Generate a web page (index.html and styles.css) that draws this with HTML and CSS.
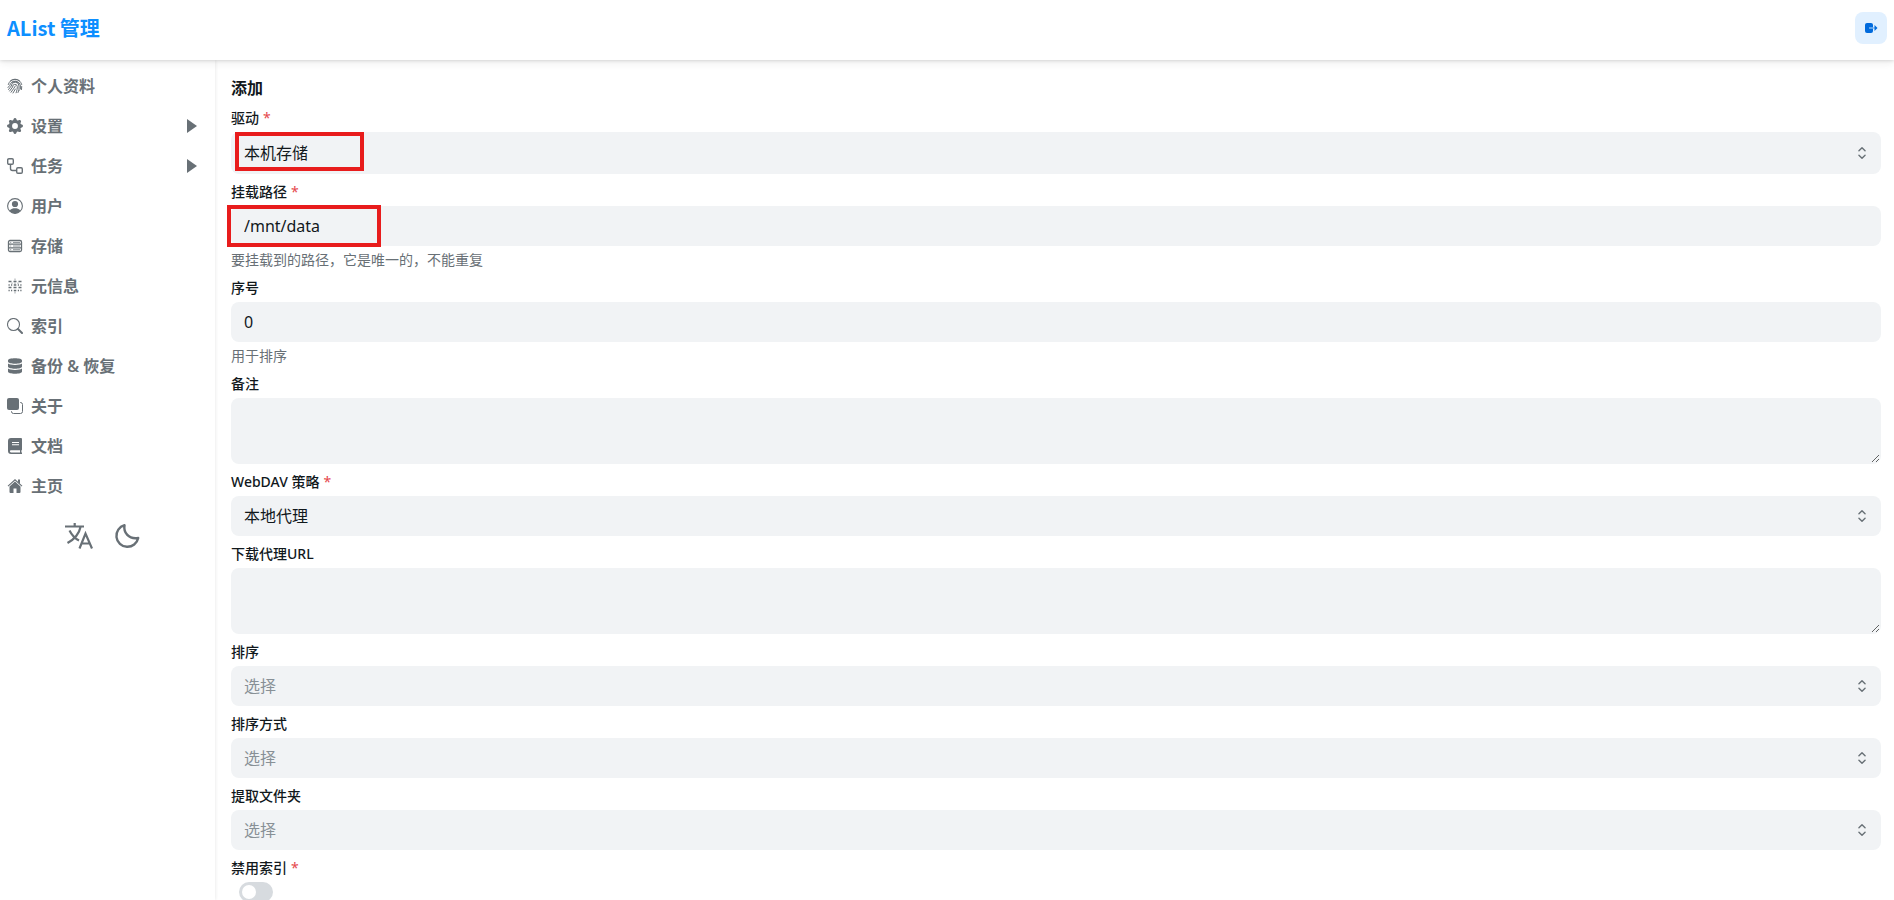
FILE: index.html
```html
<!DOCTYPE html>
<html lang="zh-CN">
<head>
<meta charset="utf-8">
<title>AList 管理</title>
<link rel="stylesheet" href="styles.css">
</head>
<body>
<svg class="defs" aria-hidden="true">
  <symbol id="updown" viewBox="0 0 16 16"><path d="M4.500 5.500 8 2l3.500 3.500M4.500 10.500 8 14l3.500-3.500" fill="none" stroke="currentColor" stroke-width="1.600" stroke-linecap="round" stroke-linejoin="round"/></symbol>
</svg>
<header class="header">
  <a class="brand" href="#">AList 管理</a>
  <button class="logout" type="button" aria-label="登出">
    <svg viewBox="0 0 16 16" width="16" height="16"><rect x="2" y="3" width="8" height="10" rx="2" fill="currentColor"/><path d="M6 8h6" stroke="#7db8f2" stroke-width="1.500"/><path d="M11.500 5 14.500 8l-3 3z" fill="currentColor"/></svg>
  </button>
</header>
<div class="layout">
  <nav class="sidebar">
    <a class="item" href="#"><svg viewBox="0 0 16 16" class="icon"><g fill="none" stroke="currentColor" stroke-width="1" stroke-linecap="round"><path d="M3.500 2.700A7 7 0 0 1 12.500 2.700M1.300 6.500a7 7 0 0 1 13.400 0M1 9.500 2.800 7.400A5.400 5.400 0 0 1 13.400 8v3M1.500 11.500 4.300 8A3.800 3.800 0 0 1 12 8v4.500M2.600 13l3-4A2.300 2.300 0 0 1 10.300 8.500c0 2-.3 4-1.200 6.300M4 14.300l3-4.200L8.300 8M6 15l2.400-4M11 14.500l.7-2M14.700 8.500l-.2 3M5 4.200a5.400 5.400 0 0 1 6.500.5"/></g></svg><span>个人资料</span></a>
    <a class="item" href="#"><svg viewBox="0 0 16 16" class="icon" fill="currentColor"><path d="M9.405 1.050c-.413-1.400-2.397-1.400-2.810 0l-.1.340a1.464 1.464 0 0 1-2.105.872l-.310-.170c-1.283-.698-2.686.705-1.987 1.987l.169.311c.446.820.023 1.841-.872 2.105l-.340.100c-1.400.413-1.400 2.397 0 2.810l.340.100a1.464 1.464 0 0 1 .872 2.105l-.170.310c-.698 1.283.705 2.686 1.987 1.987l.311-.169a1.464 1.464 0 0 1 2.105.872l.100.340c.413 1.400 2.397 1.400 2.810 0l.100-.340a1.464 1.464 0 0 1 2.105-.872l.310.170c1.283.698 2.686-.705 1.987-1.987l-.169-.311a1.464 1.464 0 0 1 .872-2.105l.340-.100c1.400-.413 1.400-2.397 0-2.810l-.340-.100a1.464 1.464 0 0 1-.872-2.105l.170-.310c.698-1.283-.705-2.686-1.987-1.987l-.311.169a1.464 1.464 0 0 1-2.105-.872zM8 10.930a2.930 2.930 0 1 1 0-5.860 2.930 2.930 0 0 1 0 5.860z"/></svg><span>设置</span><svg viewBox="0 0 12 14" class="arrow"><path d="M1 0 11 7 1 14z" fill="currentColor"/></svg></a>
    <a class="item" href="#"><svg viewBox="0 0 16 16" class="icon"><g fill="none" stroke="currentColor" stroke-width="1.400"><rect x=".7" y=".7" width="5.600" height="5.600" rx="1.200"/><rect x="9.700" y="9.700" width="5.600" height="5.600" rx="1.200"/><path d="M3.500 6.300V10.500a2 2 0 0 0 2 2H9.700"/></g></svg><span>任务</span><svg viewBox="0 0 12 14" class="arrow"><path d="M1 0 11 7 1 14z" fill="currentColor"/></svg></a>
    <a class="item" href="#"><svg viewBox="0 0 16 16" class="icon"><circle cx="8" cy="8" r="7.400" fill="none" stroke="currentColor" stroke-width="1.100"/><circle cx="8" cy="6" r="3.100" fill="currentColor"/><path d="M2.500 12.700C4 10.600 6 10.200 8 10.200s4 .4 5.500 2.500A7.400 7.400 0 0 1 8 15.400a7.400 7.400 0 0 1-5.500-2.700z" fill="currentColor"/></svg><span>用户</span></a>
    <a class="item" href="#"><svg viewBox="0 0 16 16" class="icon"><g fill="none" stroke="currentColor"><rect x="1.500" y="2.500" width="13" height="11" rx="1.500" stroke-width="1.300"/><path d="M1.500 6.200h13M1.500 9.800h13" stroke-width="1.200"/><path d="M6 4.400h7M6 8h7M6 11.700h7M3.200 4.400h1M3.200 8h1M3.200 11.700h1" stroke-width=".8"/></g></svg><span>存储</span></a>
    <a class="item" href="#"><svg viewBox="0 0 16 16" class="icon"><g fill="none" stroke="currentColor" stroke-width="1.300"><path d="M1.500 3.500h3M6.500 3.500h3M11.500 3.500h3M1.500 7h1.200M4 7h1.200M6.800 7h2.500M10.800 7H12M13.300 7h1.200M1.500 9.500h3M6.500 9.500h3M11.500 9.500h3M1.500 12.500h1.200M4 12.500h1.200M6.800 12.500h2.500M10.800 12.500H12M13.300 12.500h1.200"/><path d="M8 .5v2M8 4.500v2M5 4.500v1.500M11 4.500v1.500M8 13.500v2" stroke-width="1" opacity=".6"/></g></svg><span>元信息</span></a>
    <a class="item" href="#"><svg viewBox="0 0 16 16" class="icon"><circle cx="6.500" cy="6.500" r="6" fill="none" stroke="currentColor" stroke-width="1.100"/><path d="m11 11 4 4" stroke="currentColor" stroke-width="2" stroke-linecap="round"/></svg><span>索引</span></a>
    <a class="item" href="#"><svg viewBox="0 0 16 16" class="icon" fill="currentColor"><path d="M1 2.500C1 1 4 .3 8 .3s7 .7 7 2.200v1C15 5 12 5.700 8 5.700S1 5 1 3.500zM1 5.500c1.500 1.100 4 1.400 7 1.400s5.500-.3 7-1.400v3c0 1.500-3 2.200-7 2.200s-7-.7-7-2.200zM1 10.500c1.500 1.100 4 1.400 7 1.400s5.500-.3 7-1.400v3c0 1.500-3 2.200-7 2.200s-7-.7-7-2.200z"/></svg><span>备份 &amp; 恢复</span></a>
    <a class="item" href="#"><svg viewBox="0 0 16 16" class="icon"><rect x="0" y="0" width="12" height="12" rx="2" fill="currentColor"/><path d="M13 4.500h.5a2 2 0 0 1 2 2v7a2 2 0 0 1-2 2h-7a2 2 0 0 1-2-2V13" fill="none" stroke="currentColor"/></svg><span>关于</span></a>
    <a class="item" href="#"><svg viewBox="0 0 16 16" class="icon"><path fill="currentColor" fill-rule="evenodd" d="M4 0h10a1 1 0 0 1 1 1v10.500a1 1 0 0 1-.6.900v2.100H15V16H4a3 3 0 0 1-3-3V3a3 3 0 0 1 3-3zM4 12.200a1.100 1.100 0 0 0 0 2.200h9v-2.200zM5 4v1h7V4zM5 6.200v1h7v-1z"/></svg><span>文档</span></a>
    <a class="item" href="#"><svg viewBox="0 0 16 16" class="icon" fill="currentColor"><path d="M8 3.500 2.500 8.500V14a1 1 0 0 0 1 1h3v-4.500h3V15h3a1 1 0 0 0 1-1V8.500z"/><path d="M1 8.200 8 1.800l7 6.400" fill="none" stroke="currentColor" stroke-width="1.100"/><path d="M11 1.500h2V6l-2-1.800z"/></svg><span>主页</span></a>
    <div class="tools">
      <button class="tool" type="button" aria-label="语言"><svg viewBox="0 0 28 28" width="28" height="28"><g fill="none" stroke="currentColor" stroke-width="2.200"><path d="M0 4.500h19M9.700 1v3.500M15.500 5C14 12.500 8 18 2.500 21M4.500 8.500C7 13.500 10 16.500 14 18.500M14.500 26.500 20.500 11.500 27 26.500M16.500 21.500h8.500"/></g></svg></button>
      <button class="tool" type="button" aria-label="深色模式"><svg viewBox="0 0 28 28" width="28" height="28"><path d="M11.500 3.200C10.300 10.500 15.500 17.500 25.200 16A11 11 0 1 1 11.500 3.200z" fill="none" stroke="currentColor" stroke-width="2.400" stroke-linejoin="round"/></svg></button>
    </div>
  </nav>
  <main class="content">
    <h1 class="title">添加</h1>
    <form class="form">
      <div class="field">
        <label class="label required" for="driver">驱动</label>
        <div class="control">
          <select class="input tall" id="driver"><option>本机存储</option></select>
          <svg class="updown"><use href="#updown"/></svg>
          <span class="mark mark-driver"></span>
        </div>
      </div>
      <div class="field">
        <label class="label required" for="mount">挂载路径</label>
        <div class="control">
          <input class="input" id="mount" type="text" value="/mnt/data">
          <span class="mark mark-mount"></span>
        </div>
        <p class="help">要挂载到的路径，它是唯一的，不能重复</p>
      </div>
      <div class="field">
        <label class="label" for="order">序号</label>
        <input class="input" id="order" type="text" inputmode="numeric" value="0">
        <p class="help">用于排序</p>
      </div>
      <div class="field">
        <label class="label" for="remark">备注</label>
        <textarea class="input area" id="remark"></textarea>
      </div>
      <div class="field">
        <label class="label required" for="webdav">WebDAV 策略</label>
        <div class="control">
          <select class="input" id="webdav"><option>本地代理</option></select>
          <svg class="updown"><use href="#updown"/></svg>
        </div>
      </div>
      <div class="field">
        <label class="label" for="proxy">下载代理URL</label>
        <textarea class="input area" id="proxy"></textarea>
      </div>
      <div class="field">
        <label class="label" for="sort">排序</label>
        <div class="control">
          <select class="input empty" id="sort"><option>选择</option></select>
          <svg class="updown"><use href="#updown"/></svg>
        </div>
      </div>
      <div class="field">
        <label class="label" for="direction">排序方式</label>
        <div class="control">
          <select class="input empty" id="direction"><option>选择</option></select>
          <svg class="updown"><use href="#updown"/></svg>
        </div>
      </div>
      <div class="field">
        <label class="label" for="folder">提取文件夹</label>
        <div class="control">
          <select class="input empty" id="folder"><option>选择</option></select>
          <svg class="updown"><use href="#updown"/></svg>
        </div>
      </div>
      <div class="field">
        <label class="label required" for="noindex">禁用索引</label>
        <input class="switch" id="noindex" type="checkbox">
      </div>
    </form>
  </main>
</div>
</body>
</html>
```
FILE: styles.css
```css
* { box-sizing: border-box; }

body {
  margin: 0;
  height: 100vh;
  display: flex;
  flex-direction: column;
  overflow: hidden;
  font-family: "Noto Sans", "Noto Sans CJK SC", sans-serif;
  font-size: 16px;
  line-height: 24px;
  color: #11181c;
  background: #fff;
}

button, input, select, textarea { font: inherit; color: inherit; }

.defs { position: absolute; width: 0; height: 0; }

.header {
  flex: none;
  height: 60px;
  padding: 0 7px;
  display: flex;
  align-items: center;
  justify-content: space-between;
  background: #fff;
  box-shadow: 0 1px 3px rgba(0, 0, 0, .12), 0 4px 8px rgba(0, 0, 0, .06);
  z-index: 1;
}

.brand {
  font-family: "Noto Sans CJK SC", "Noto Sans", sans-serif;
  font-size: 20px;
  font-weight: 600;
  line-height: 28px;
  margin-bottom: 4px;
  color: #0d8fff;
  text-decoration: none;
}

.logout {
  width: 32px;
  height: 32px;
  margin-bottom: 4px;
  padding: 0;
  display: grid;
  place-items: center;
  border: 0;
  border-radius: 8px;
  background: #e1f0ff;
  color: #006adc;
}

.layout { flex: 1; min-height: 0; display: flex; }

.sidebar {
  flex: none;
  width: 215px;
  padding: 6px 7px;
  box-shadow: 1px 0 3px rgba(0, 0, 0, .07);
  color: #687076;
}

.item {
  display: flex;
  align-items: center;
  gap: 8px;
  height: 40px;
  padding-right: 10px;
  color: inherit;
  font-weight: 600;
  text-decoration: none;
}

.icon { flex: none; width: 16px; height: 16px; }
.arrow { width: 12px; height: 14px; margin-left: auto; }

.tools {
  display: flex;
  justify-content: center;
  gap: 20px;
  padding-top: 16px;
  padding-right: 10px;
}

.tool {
  padding: 0;
  display: grid;
  border: 0;
  background: none;
  color: inherit;
}

.content {
  flex: 1;
  min-width: 0;
  padding: 16px 13px 16px 16px;
  overflow-y: auto;
  scrollbar-width: none;
}

.title { margin: 0 0 8px; font-size: 16px; font-weight: 700; line-height: 24px; }

.form { display: flex; flex-direction: column; gap: 8px; }

.field { display: flex; flex-direction: column; gap: 4px; }

.label { font-size: 14px; font-weight: 500; line-height: 20px; }
.required::after { content: "*"; margin-left: 4px; color: #e5484d; font-weight: 400; }

.control { position: relative; display: flex; }

.input {
  display: block;
  width: 100%;
  height: 40px;
  margin: 0;
  padding: 0 12px;
  border: 1px solid transparent;
  border-radius: 8px;
  background: #f1f3f5;
  appearance: none;
}

.tall { height: 42px; }
.area { height: 66px; padding: 8px 12px; resize: vertical; }
.empty { color: #889096; }

.updown {
  position: absolute;
  top: 50%;
  right: 12px;
  width: 14px;
  height: 14px;
  margin-top: -7px;
  color: #687076;
  pointer-events: none;
}

.help { margin: 0; font-size: 14px; line-height: 20px; color: #687076; }

.mark { position: absolute; border: 4px solid #e81c1c; pointer-events: none; }
.mark-driver { left: 4px; top: 0; width: 129px; height: 39px; }
.mark-mount { left: -4px; top: -1px; width: 154px; height: 42px; }

.switch {
  width: 34px;
  height: 20px;
  margin: 0 0 0 8px;
  padding: 3px;
  border-radius: 10px;
  background: #d7dbdf;
  appearance: none;
}
.switch::before {
  content: "";
  display: block;
  width: 14px;
  height: 14px;
  border-radius: 50%;
  background: #fff;
}
.switch:checked { background: #1890ff; }
.switch:checked::before { margin-left: 14px; }
```
